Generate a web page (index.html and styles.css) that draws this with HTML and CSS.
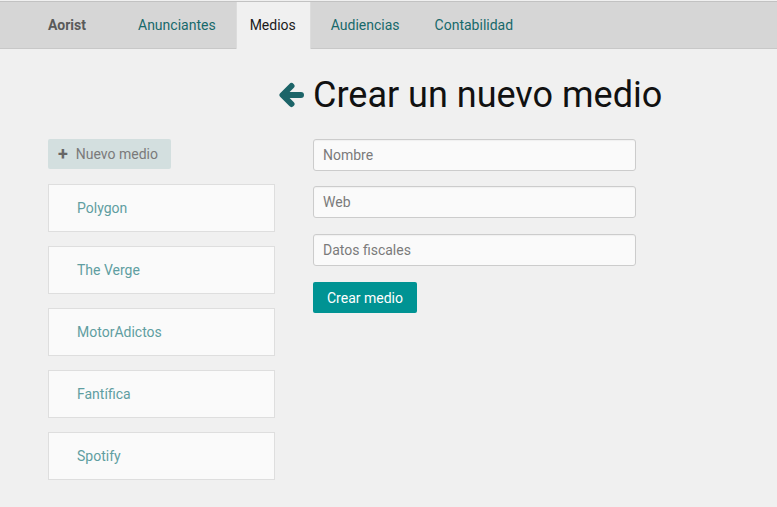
FILE: index.html
```html
<!DOCTYPE html>
<html lang="es">
<head>
<meta charset="utf-8">
<title>Aorist - Medios</title>
<link rel="stylesheet" href="styles.css">
</head>
<body>
<nav class="navbar">
  <span class="brand">Aorist</span>
  <ul class="nav">
    <li><a href="#">Anunciantes</a></li>
    <li class="active"><a href="#">Medios</a></li>
    <li><a href="#">Audiencias</a></li>
    <li><a href="#">Contabilidad</a></li>
  </ul>
</nav>
<main class="page">
  <h1 class="title">
    <svg class="back" width="26" height="26" viewBox="0 0 26 26" aria-hidden="true">
      <path d="M23 13 H5 M13.5 4 L4.5 13 L13.5 22" fill="none" stroke="#1c6468" stroke-width="6" stroke-linecap="round" stroke-linejoin="round"/>
    </svg>
    <span>Crear un nuevo medio</span>
  </h1>
  <div class="content">
    <aside class="sidebar">
      <button class="new-btn"><span class="plus">+</span> Nuevo medio</button>
      <ul class="list">
        <li class="card"><a href="#">Polygon</a></li>
        <li class="card"><a href="#">The Verge</a></li>
        <li class="card"><a href="#">MotorAdictos</a></li>
        <li class="card"><a href="#">Fantífica</a></li>
        <li class="card"><a href="#">Spotify</a></li>
      </ul>
    </aside>
    <form class="form">
      <input class="field field-first" type="text" placeholder="Nombre">
      <input class="field" type="text" placeholder="Web">
      <input class="field" type="text" placeholder="Datos fiscales">
      <button class="submit" type="button">Crear medio</button>
    </form>
  </div>
</main>
</body>
</html>
```
FILE: styles.css
```css
* { box-sizing: border-box; }
html, body { margin: 0; padding: 0; }
body {
  background: #f0f0f0;
  font-family: Roboto, "Liberation Sans", sans-serif;
  font-size: 14px;
  color: #222;
  padding-top: 1px;
}
.navbar {
  display: flex;
  align-items: stretch;
  height: 48px;
  background: #d6d6d6;
  border-top: 1px solid #c2c2c2;
  border-bottom: 1px solid #c8c8c8;
  padding-left: 48px;
}
.brand {
  display: flex;
  align-items: center;
  font-weight: 700;
  color: #5a5a5a;
  padding-right: 37px;
}
.nav {
  display: flex;
  list-style: none;
  margin: 0;
  padding: 0;
  gap: 5px;
}
.nav li { display: flex; }
.nav a {
  display: flex;
  align-items: center;
  padding: 0 15px;
  color: #17696b;
  text-decoration: none;
}
.nav .active a {
  background: #f0f0f0;
  color: #1a1a1a;
  border-left: 1px solid #dcdcdc;
  border-right: 1px solid #dcdcdc;
  margin-bottom: -1px;
  padding: 0 14px 1px 13px;
}
.page { padding: 0 48px; }
.title {
  display: flex;
  align-items: center;
  gap: 9px;
  margin: 25px 0 0 230px;
  font-size: 36px;
  font-weight: 400;
  line-height: 42px;
  color: #111;
}
.back { flex: none; }
.content {
  display: flex;
  gap: 38px;
  margin-top: 23px;
}
.sidebar { width: 227px; }
.new-btn {
  display: flex;
  align-items: center;
  height: 30px;
  padding: 0 13px 0 10px;
  border: none;
  border-radius: 2px;
  background: #d3dfdf;
  color: #7a7a7a;
  font: inherit;
  font-size: 14px;
}
.plus {
  font-weight: 700;
  font-size: 18px;
  color: #666;
  margin-right: 8px;
  line-height: 1;
}
.list {
  list-style: none;
  margin: 15px 0 0;
  padding: 0;
  display: flex;
  flex-direction: column;
  gap: 14px;
}
.card {
  height: 48px;
  display: flex;
  align-items: center;
  padding-left: 28px;
  background: #fafafa;
  border: 1px solid #dedede;
}
.card a {
  color: #5f9ea1;
  text-decoration: none;
}
.form {
  width: 323px;
  display: flex;
  flex-direction: column;
  align-items: flex-start;
  gap: 16px;
  margin: 0;
}
.field {
  width: 100%;
  height: 32px;
  padding: 0 9px;
  background: #fafafa;
  border: 1px solid #cccccc;
  border-radius: 3px;
  font: inherit;
  font-size: 14px;
  color: #333;
  box-shadow: inset 0 1px 1px rgba(0,0,0,0.04);
}
.field-first { margin-bottom: -1px; }
.field::placeholder { color: #7a7a7a; }
.submit {
  height: 31px;
  padding: 0 14px;
  border: none;
  border-radius: 2px;
  background: #009393;
  color: #fff;
  font: inherit;
  font-size: 14px;
}
```
